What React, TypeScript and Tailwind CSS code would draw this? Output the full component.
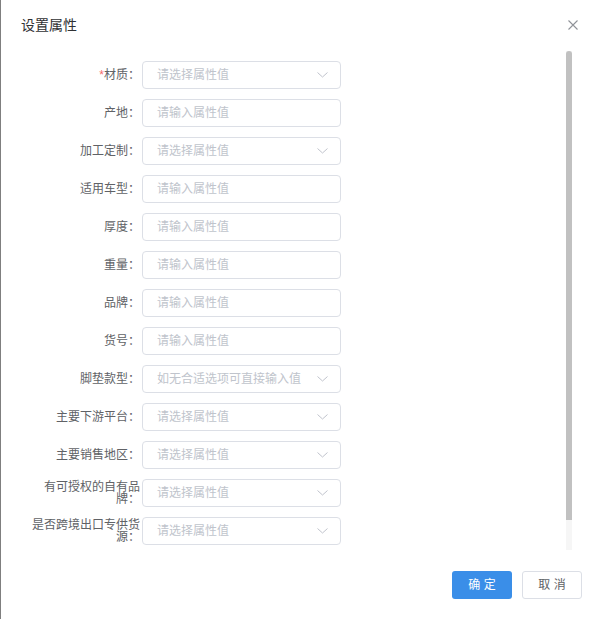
import React from "react";

type Row = { label: string; placeholder: string; select: boolean; required?: boolean };

const rows: Row[] = [
  { label: "材质：", placeholder: "请选择属性值", select: true, required: true },
  { label: "产地：", placeholder: "请输入属性值", select: false },
  { label: "加工定制：", placeholder: "请选择属性值", select: true },
  { label: "适用车型：", placeholder: "请输入属性值", select: false },
  { label: "厚度：", placeholder: "请输入属性值", select: false },
  { label: "重量：", placeholder: "请输入属性值", select: false },
  { label: "品牌：", placeholder: "请输入属性值", select: false },
  { label: "货号：", placeholder: "请输入属性值", select: false },
  { label: "脚垫款型：", placeholder: "如无合适选项可直接输入值", select: true },
  { label: "主要下游平台：", placeholder: "请选择属性值", select: true },
  { label: "主要销售地区：", placeholder: "请选择属性值", select: true },
  { label: "有可授权的自有品牌：", placeholder: "请选择属性值", select: true },
  { label: "是否跨境出口专供货源：", placeholder: "请选择属性值", select: true },
];

function Chevron() {
  return (
    <svg width="11" height="6" viewBox="0 0 11 6" fill="none" className="shrink-0">
      <path d="M0.5 0.5 L5.5 5 L10.5 0.5" stroke="#c0c4cc" strokeWidth="1" />
    </svg>
  );
}

export default function App() {
  return (
    <div
      className="w-[599px] h-[619px] bg-white border-l border-[#7f7f7f] flex flex-col overflow-hidden"
      style={{ fontFamily: '"Liberation Sans", "Noto Sans CJK SC", sans-serif' }}
    >
      <div className="h-[50px] flex items-center justify-between pl-[20px] pr-[21px] shrink-0">
        <span className="text-[14px] text-[#303133]">设置属性</span>
        <svg width="10" height="10" viewBox="0 0 10 10" fill="none">
          <path d="M0.5 0.5 L9.5 9.5 M9.5 0.5 L0.5 9.5" stroke="#909399" strokeWidth="1.1" />
        </svg>
      </div>
      <div className="flex h-[500px] shrink-0">
        <div className="flex flex-col gap-[10px] pt-[11px] pl-[30px]">
          {rows.map((r) => (
            <div key={r.label} className="flex items-center h-[28px]">
              <div className="w-[111px] pr-[2px] text-right text-[12px] leading-[12px] text-[#606266]">
                {r.required && <span className="text-[#f56c6c]">*</span>}
                {r.label}
              </div>
              <div className="w-[199px] h-[28px] border border-[#dcdfe6] rounded-[4px] bg-white flex items-center pl-[14px] pr-[12px]">
                <input
                  readOnly
                  placeholder={r.placeholder}
                  className="flex-1 min-w-0 bg-transparent outline-none text-[12px] text-[#606266] placeholder:text-[#c0c4cc]"
                />
                {r.select && <Chevron />}
              </div>
            </div>
          ))}
        </div>
        <div className="ml-auto mr-[27px] mt-[1px] w-[6px] h-[499px] bg-[#f6f6f6] flex flex-col">
          <div className="h-[469px] bg-[#c1c1c1] rounded-t-[3px]" />
        </div>
      </div>
      <div className="flex justify-end gap-[10px] pt-[21px] pr-[17px]">
        <button className="w-[60px] h-[28px] rounded-[3px] bg-[#3a8ee8] text-white text-[12px]">
          确 定
        </button>
        <button className="w-[60px] h-[28px] rounded-[3px] border border-[#dcdfe6] bg-white text-[#606266] text-[12px]">
          取 消
        </button>
      </div>
    </div>
  );
}
